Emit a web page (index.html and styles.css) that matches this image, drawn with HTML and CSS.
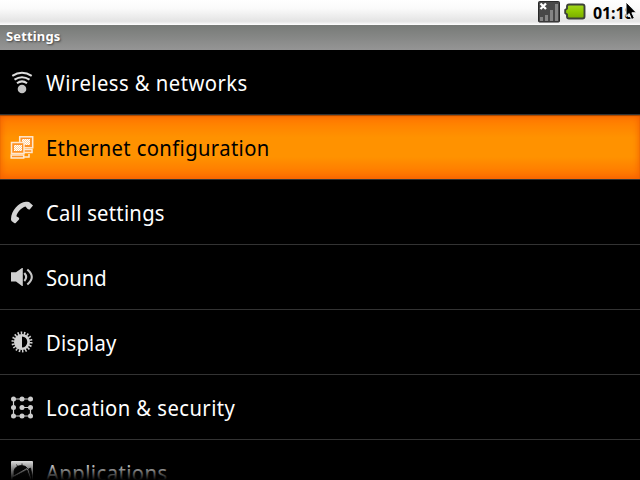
FILE: index.html
```html
<!DOCTYPE html>
<html lang="en">
<head>
<meta charset="utf-8">
<title>Settings</title>
<link rel="stylesheet" href="styles.css">
</head>
<body>
<div class="screen">
  <header class="status">
    <svg class="signal" width="22" height="22" viewBox="0 0 22 22">
      <rect x=".5" y=".5" width="21" height="20.5" rx="1" fill="#484848" stroke="#292929"/>
      <path d="M2 16h3v4H2zM7 14h3v6H7zM12 9h3v11h-3zM17 3h3v17h-3z" fill="#858585"/>
      <path d="M2.500 2.500l5.500 5.500M8 2.500l-5.500 5.500" stroke="#fff" stroke-width="2.300"/>
    </svg>
    <svg class="battery" width="22" height="18" viewBox="0 0 22 18">
      <defs><linearGradient id="bat" x1="0" y1="0" x2="0" y2="1"><stop offset="0" stop-color="#a4d820"/><stop offset=".5" stop-color="#8fc800"/><stop offset="1" stop-color="#78aa00"/></linearGradient></defs>
      <path d="M5 1.500h13.500q2 0 2 2v10q0 2-2 2H5q-2 0-2-2v-2L1.200 10V7L3 5.500v-2q0-2 2-2z" fill="url(#bat)" stroke="#3d4238" stroke-width="1.900"/>
    </svg>
    <span class="clock">01:18</span>
    <svg class="pointer" width="14" height="20" viewBox="0 0 14 20">
      <path d="M1 1v14.500l3.200-3L6.500 18.500l3-1.200-2.600-5.500h4.600z" fill="#000" stroke="#fff" stroke-width="1"/>
    </svg>
  </header>
  <h1 class="title">Settings</h1>
  <ul class="list">
    <li class="row">
      <svg class="icon" viewBox="0 0 24 24"><g fill="none" stroke="#ddd" stroke-width="2"><path d="M2.300 4.800Q12 -1.300 21.700 4.800"/><path d="M4.500 8.700Q12 3.600 19.500 8.700"/><path d="M7 12.300Q12 8.400 17 12.300"/></g><circle cx="12" cy="18" r="4.300" fill="#c4c4c4"/></svg>
      <span class="label wireless">Wireless &amp; networks</span>
    </li>
    <li class="row selected">
      <svg class="icon" viewBox="0 0 24 24"><defs><pattern id="dots" width="2" height="2" patternUnits="userSpaceOnUse"><rect width="2" height="2" fill="#ffd09a"/><path d="M0 0h1v1H0zM1 1h1v1H1z" fill="#fff"/></pattern></defs>
        <g stroke="#ffe8cf" stroke-width="1.500"><rect x="9.700" y=".8" width="13" height="11" fill="#ff9224"/><rect x="12" y="3" width="8" height="6" fill="url(#dots)" stroke="none"/><rect x="12" y="13.500" width="10" height="3" fill="#ff9224"/><path d="M14 21h5v-3" fill="none"/><rect x="1.500" y="6.500" width="12.500" height="11" fill="#ff9224"/><rect x="4" y="9" width="8" height="6" fill="url(#dots)" stroke="none"/><rect x="1.200" y="19" width="12.500" height="3" fill="#ff9224"/></g>
      </svg>
      <span class="label ethernet">Ethernet configuration</span>
    </li>
    <li class="row">
      <svg class="icon" viewBox="0 0 24 24"><path d="M1 18C1.300 9.500 8.500 1.500 16 .8q2-.1 3 .1l4 3.500-3.300 4q-1 .4-2-.3l-2.200-2.600C11.500 6.500 7 11.500 6.400 15.300l2.500 1.500q.6.800.1 1.600L5.700 22Q5 22.600 4.200 21.900L1.500 20Q1 19.200 1 18z" fill="#d4d4d4"/></svg>
      <span class="label call">Call settings</span>
    </li>
    <li class="row">
      <svg class="icon" viewBox="0 0 24 24"><path d="M1 6.300h5L12 2h.8v18H12L6 15.500H1z" fill="#cfcfcf"/><path d="M14.300 7q3.700 4 0 8M17.300 3.500q9 7.500 0 15" fill="none" stroke="#c8c8c8" stroke-width="2.100"/></svg>
      <span class="label sound">Sound</span>
    </li>
    <li class="row">
      <svg class="icon" viewBox="0 0 24 24"><circle cx="12" cy="11" r="9" fill="none" stroke="#d0d0d0" stroke-width="3" stroke-dasharray="1.500 1.642"/><circle cx="12" cy="11" r="8" fill="#d2d2d2"/><path d="M12 5.500a5.300 5.500 0 0 1 0 11z" fill="#000"/></svg>
      <span class="label display">Display</span>
    </li>
    <li class="row">
      <svg class="icon" viewBox="0 0 24 24"><path d="M20.500 11.500H12M3.500 3H20.500M3.500 3V20H20.500V11.500" fill="none" stroke="#cfcfcf" stroke-width="1.200"/><g fill="#cdcdcd"><circle cx="3.500" cy="3" r="2.500"/><circle cx="12" cy="3" r="2.500"/><circle cx="20.500" cy="3" r="2.500"/><circle cx="3.500" cy="11.500" r="2.500"/><circle cx="12" cy="11.500" r="2.500"/><circle cx="20.500" cy="11.500" r="2.500"/><circle cx="3.500" cy="20" r="2.500"/><circle cx="12" cy="20" r="2.500"/><circle cx="20.500" cy="20" r="2.500"/></g></svg>
      <span class="label location">Location &amp; security</span>
    </li>
    <li class="row">
      <svg class="icon" viewBox="0 0 24 24"><rect x="1" y="0" width="22" height="22" rx="1" fill="#ddd"/><path d="M4 10Q5 5 11 4.500q5 0 6.500 3L4 14zM8 6L6.500 3.500M12 5V2.500M3 16.500l14-7.500 3 9v4H3zM18.500 8l2-1 1.500 7v5z" fill="#080808" stroke="#080808" stroke-width=".8"/><path d="M3 15.500l14-8" stroke="#ccc"/></svg>
      <span class="label apps">Applications</span>
    </li>
  </ul>
  <div class="fade"></div>
</div>
</body>
</html>
```
FILE: styles.css
```css
* { box-sizing: border-box; }
body { margin: 0; background: #000; font-family: "Noto Sans", "Open Sans", sans-serif; }
.screen { position: relative; width: 640px; height: 480px; overflow: hidden; background: #000; }
.status {
  position: relative; display: flex; align-items: flex-start; height: 25px; padding: 1px 0 0 538px;
  background: linear-gradient(#fff 0, #fafafa 35%, #e4e4e4 85%, #ececec 90%, #fff 100%);
}
.signal { flex: none; }
.battery { flex: none; margin: 2px 0 0 4px; }
.clock { flex: none; margin-left: 7px; font-size: 16px; line-height: 24px; font-weight: 700; color: #000; letter-spacing: -.1px; }
.pointer { position: absolute; left: 625px; top: 1px; }
.title {
  margin: 0; height: 25px; padding-left: 6px; font-size: 13px; line-height: 23px; font-weight: 700;
  letter-spacing: .15px; color: #fff; text-shadow: 1px 1px 2px #444;
  background: linear-gradient(#777a77, #959595);
}
.list { margin: 0; padding: 0; list-style: none; }
.row { display: flex; align-items: center; height: 65px; padding-left: 10px; border-bottom: 1px solid #333; color: #fff; }
.selected {
  color: #000;
  background: linear-gradient(#ff7800, #ff9200 35%, #ff9200 65%, #ff7200);
  box-shadow: inset 0 1px 1px #a44800, inset 0 0 7px 1px #f45f00;
}
.icon { flex: none; width: 24px; height: 24px; margin: 2px 12px 0 0; }
.label { font-size: 22px; line-height: 30px; white-space: nowrap; transform: scaleX(.92); transform-origin: left center; }
.wireless { letter-spacing: .5px; }
.ethernet { letter-spacing: .4px; }
.call { letter-spacing: .28px; }
.sound { letter-spacing: 0; }
.display { letter-spacing: .25px; }
.location { letter-spacing: .47px; }
.apps { letter-spacing: .48px; }
.fade { position: absolute; left: 0; right: 0; bottom: 0; height: 19px; background: linear-gradient(transparent, #000); }
```
